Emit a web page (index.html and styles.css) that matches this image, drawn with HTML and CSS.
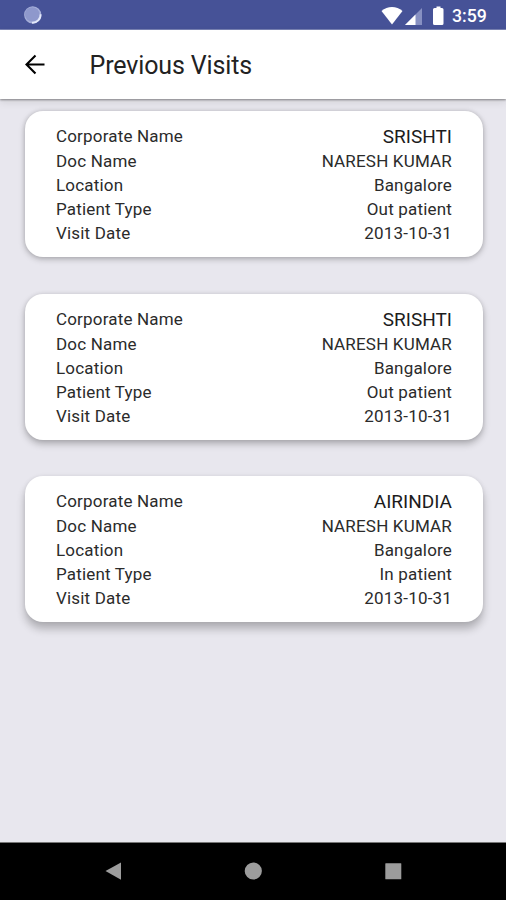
FILE: index.html
```html
<!DOCTYPE html>
<html lang="en">
<head>
<meta charset="utf-8">
<title>Previous Visits</title>
<link rel="stylesheet" href="styles.css">
</head>
<body>
<div class="screen">
  <div class="status">
    <svg class="spinner" width="20" height="20" viewBox="0 0 20 20"><circle cx="9.700" cy="9.900" r="8.600" fill="#a6afd9"/><circle cx="9.200" cy="9.400" r="7.200" fill="#8e98cc"/><path d="M17.600 9.200A8 8 0 0 1 9 17.700" fill="none" stroke="#e3e8fa" stroke-width="1.800"/></svg>
    <svg class="signals" width="66" height="22" viewBox="0 0 66 22"><path d="M0.500 6C6.500.8 15.500.8 21.500 6L11 19.500Z" fill="#fff"/><path d="M41 3V20H24Z" fill="#8790c2"/><path d="M34.500 9.500V20H24Z" fill="#fff"/><path d="M53.500 3h2V1.500h4V3h1.500Q62.500 3 62.500 4.500V18.500Q62.500 20 61 20H53.500Q52 20 52 18.500V4.500Q52 3 53.500 3Z" fill="#fff"/></svg>
    <span class="clock">3:59</span>
  </div>
  <header class="bar">
    <svg class="back" width="22" height="22" viewBox="0 0 22 22" fill="none" stroke="#000" stroke-width="2.100"><path d="M20.500 10.500H2.500M11.500 1.500L2.500 10.500L11.500 19.500"/></svg>
    <h1 class="title">Previous Visits</h1>
  </header>
  <main class="list">
    <section class="card">
      <div class="row first"><span>Corporate Name</span><span class="company">SRISHTI</span></div>
      <div class="row"><span>Doc Name</span><span>NARESH KUMAR</span></div>
      <div class="row"><span>Location</span><span>Bangalore</span></div>
      <div class="row"><span>Patient Type</span><span>Out patient</span></div>
      <div class="row"><span>Visit Date</span><span>2013-10-31</span></div>
    </section>
    <section class="card mid">
      <div class="row first"><span>Corporate Name</span><span class="company">SRISHTI</span></div>
      <div class="row"><span>Doc Name</span><span>NARESH KUMAR</span></div>
      <div class="row"><span>Location</span><span>Bangalore</span></div>
      <div class="row"><span>Patient Type</span><span>Out patient</span></div>
      <div class="row"><span>Visit Date</span><span>2013-10-31</span></div>
    </section>
    <section class="card low">
      <div class="row first"><span>Corporate Name</span><span class="company">AIRINDIA</span></div>
      <div class="row"><span>Doc Name</span><span>NARESH KUMAR</span></div>
      <div class="row"><span>Location</span><span>Bangalore</span></div>
      <div class="row"><span>Patient Type</span><span>In patient</span></div>
      <div class="row"><span>Visit Date</span><span>2013-10-31</span></div>
    </section>
  </main>
  <nav class="nav">
    <svg width="20" height="20" viewBox="0 0 20 20"><path d="M18 1.500V18.800L2.500 10.100Z" fill="#9c9c9c"/></svg>
    <svg width="20" height="20" viewBox="0 0 20 20"><circle cx="10.300" cy="10" r="8.600" fill="#9c9c9c"/></svg>
    <svg width="20" height="20" viewBox="0 0 20 20"><rect x="2.300" y="2.300" width="16" height="16" rx=".5" fill="#9c9c9c"/></svg>
  </nav>
</div>
</body>
</html>
```
FILE: styles.css
```css
* { box-sizing: border-box; }
body { margin: 0; font-family: Roboto, "Liberation Sans", sans-serif; color: #111; }
.screen { display: flex; flex-direction: column; width: 506px; height: 900px; background: #e8e7ee; overflow: hidden; }
.status { display: flex; align-items: center; height: 30px; padding: 0 18px 0 23px; background: #465297; border-bottom: 1px solid #7d86b8; }
.spinner { display: block; margin-top: 1px; }
.signals { display: block; flex: none; margin: 3px 0 0 auto; }
.clock { width: 36px; margin-left: 5px; padding-top: 3px; color: #fff; font-size: 17.7px; font-weight: 500; line-height: 24px; white-space: nowrap; }
.bar { display: flex; align-items: center; height: 69px; padding-left: 24px; background: #fff; box-shadow: 0 1px 2px rgba(0,0,0,.4), 0 3px 8px rgba(0,0,0,.1); position: relative; }
.back { flex: none; }
.title { margin: 3px 0 0 43.5px; font-size: 25px; font-weight: 400; line-height: 30px; letter-spacing: -.13px; color: #222; }
.list { display: flex; flex-direction: column; flex: 1; gap: 36.5px; padding: 12px 23px 0 25px; }
.card { height: 146px; padding: 13px 31px 0; border-radius: 18px; background: #fff; box-shadow: 0 2px 6px rgba(0,0,0,.25), 0 0 4px rgba(0,0,0,.1); }
.mid { box-shadow: 0 4px 7px rgba(0,0,0,.25), 0 0 4px rgba(0,0,0,.1); }
.low { box-shadow: 0 7px 8px rgba(0,0,0,.24), 0 0 4px rgba(0,0,0,.08); }
.row { display: flex; justify-content: space-between; height: 24px; font-size: 17px; line-height: 24px; letter-spacing: .18px; color: #2b2b2b; }
.first { height: 25px; }
.company { font-size: 19px; line-height: 26px; letter-spacing: 0; color: #1c1c1c; }
.nav { display: flex; align-items: center; justify-content: space-between; height: 58px; padding: 0 103px 2px; background: #000; border-top: 1px solid #777; }
```
